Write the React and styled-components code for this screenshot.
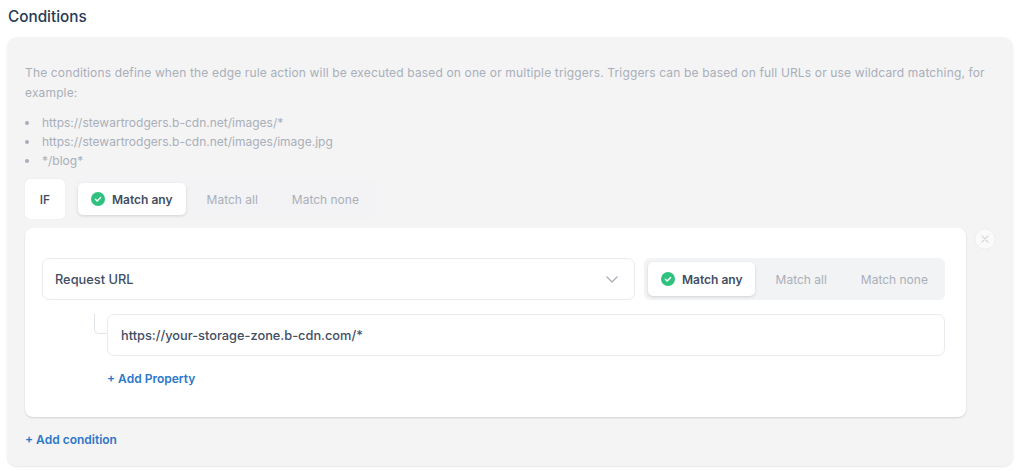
import React from 'react';
import styled, { createGlobalStyle } from 'styled-components';

const GlobalStyle = createGlobalStyle`
  html, body {
    margin: 0;
    padding: 0;
    background: #ffffff;
    font-family: Inter, "Liberation Sans", sans-serif;
  }
`;

const Page = styled.div`
  width: 1024px;
  height: 471px;
  overflow: hidden;
  padding: 7px 11px 0 7px;
  box-sizing: border-box;
`;

const Title = styled.h2`
  margin: 0 0 11px 1px;
  font-size: 15.3px;
  line-height: 19px;
  font-weight: 500;
  color: #243a55;
`;

const Panel = styled.section`
  height: 429px;
  box-sizing: border-box;
  padding: 26px 18px 0 18px;
  background: #f4f4f5;
  border-radius: 10px;
  box-shadow: 0 1px 2px rgba(0, 0, 0, 0.1);
`;

const Description = styled.p`
  margin: 0 0 10px;
  font-size: 12px;
  letter-spacing: 0.15px;
  line-height: 20px;
  color: #a9afb9;
`;

const ExampleList = styled.ul`
  margin: 0 0 9px;
  padding: 0;
  list-style: none;
  font-size: 12px;
  line-height: 19px;
  color: #a9afb9;
`;

const ExampleItem = styled.li`
  display: flex;
  align-items: center;

  &::before {
    content: '';
    width: 4px;
    height: 4px;
    margin-right: 13px;
    border-radius: 50%;
    background: #a9afb9;
  }
`;

const IfRow = styled.div`
  display: flex;
  align-items: flex-start;
  gap: 9px;
`;

const IfBadge = styled.div`
  width: 40px;
  height: 40px;
  display: flex;
  align-items: center;
  justify-content: center;
  background: #fff;
  border-radius: 5px;
  box-shadow: 0 0 1px rgba(0, 0, 0, 0.12);
  font-size: 12px;
  font-weight: 500;
  color: #3b4a5f;
`;

const Toggle = styled.div`
  flex-shrink: 0;
  display: flex;
  align-items: center;
  height: ${(p) => (p.$muted ? '40px' : '42px')};
  width: ${(p) => (p.$muted ? 'auto' : '301px')};
  box-sizing: border-box;
  padding: 4px 0 4px 4px;
  border-radius: 6px;
  background: ${(p) => (p.$muted ? '#f3f3f5' : '#f2f3f5')};
`;

const activePadding = (p) => (p.$muted ? '0 13px' : '0 12px 0 13px');

const ToggleOption = styled.div`
  height: ${(p) => (p.$muted ? '32px' : '34px')};
  box-sizing: border-box;
  display: flex;
  align-items: center;
  gap: 7px;
  font-size: 12px;
  white-space: nowrap;
  padding: ${(p) => (p.$active ? activePadding(p) : '0 17px')};
  margin-right: ${(p) => (p.$active ? '4px' : '0')};
  border-radius: 5px;
  font-weight: ${(p) => (p.$active ? 600 : 400)};
  color: ${(p) => (p.$active ? '#414e63' : '#a9afb9')};
  background: ${(p) => (p.$active ? '#fff' : 'transparent')};
  box-shadow: ${(p) => (p.$active ? '0 1px 3px rgba(0, 0, 0, 0.14)' : 'none')};
`;

const ConditionRow = styled.div`
  position: relative;
  margin-top: 9px;
`;

const Card = styled.div`
  width: 941px;
  height: 189px;
  box-sizing: border-box;
  padding: 30px 21px 0 17px;
  background: #fff;
  border-radius: 8px;
  box-shadow: 0 1px 2px rgba(0, 0, 0, 0.14);
`;

const CloseButton = styled.button`
  position: absolute;
  top: 1px;
  left: 950px;
  width: 20px;
  height: 20px;
  padding: 0;
  display: flex;
  align-items: center;
  justify-content: center;
  border: none;
  border-radius: 50%;
  background: #fafafa;
  box-shadow: 0 0 1px rgba(0, 0, 0, 0.12);
`;

const FieldRow = styled.div`
  display: flex;
  gap: 9px;
`;

const Select = styled.div`
  flex: 1;
  height: 42px;
  box-sizing: border-box;
  padding: 0 16px 0 12px;
  display: flex;
  align-items: center;
  justify-content: space-between;
  border: 1px solid #e8ebef;
  border-radius: 7px;
  font-size: 12.8px;
  font-weight: 450;
  color: #414e63;
`;

const PropertyRow = styled.div`
  position: relative;
  margin: 14px 0 0 65px;
`;

const Elbow = styled.span`
  position: absolute;
  left: -13px;
  top: 0;
  width: 13px;
  height: 20px;
  box-sizing: border-box;
  border-left: 1px solid #dfe4ea;
  border-bottom: 1px solid #dfe4ea;
  border-bottom-left-radius: 5px;
`;

const Input = styled.div`
  height: 42px;
  box-sizing: border-box;
  padding: 0 13px;
  display: flex;
  align-items: center;
  border: 1px solid #e8ebef;
  border-radius: 7px;
  font-size: 12.8px;
  font-weight: 450;
  color: #414e63;
`;

const AddLink = styled.a`
  display: block;
  font-size: 12px;
  line-height: 16px;
  font-weight: 600;
  color: #2b77c9;
  margin: ${(p) => p.$margin};
`;

const CheckIcon = () => (
  <svg width="14" height="14" viewBox="0 0 14 14">
    <circle cx="7" cy="7" r="7" fill="#2fc27e" />
    <path d="M4.4 7.2l1.8 1.7 3.4-3.4" fill="none" stroke="#fff" strokeWidth="1.4" strokeLinecap="round" strokeLinejoin="round" />
  </svg>
);

const MatchToggle = ({ muted }) => (
  <Toggle $muted={muted}>
    <ToggleOption $active $muted={muted}>
      <CheckIcon />
      Match any
    </ToggleOption>
    <ToggleOption $muted={muted}>Match all</ToggleOption>
    <ToggleOption $muted={muted}>Match none</ToggleOption>
  </Toggle>
);

export default function App() {
  return (
    <Page>
      <GlobalStyle />
      <Title>Conditions</Title>
      <Panel>
        <Description>
          The conditions define when the edge rule action will be executed based on one or multiple triggers. Triggers can be based on full URLs or use wildcard matching, for example:
        </Description>
        <ExampleList>
          <ExampleItem>https://stewartrodgers.b-cdn.net/images/*</ExampleItem>
          <ExampleItem>https://stewartrodgers.b-cdn.net/images/image.jpg</ExampleItem>
          <ExampleItem>*/blog*</ExampleItem>
        </ExampleList>
        <IfRow>
          <IfBadge>IF</IfBadge>
          <MatchToggle muted />
        </IfRow>
        <ConditionRow>
          <Card>
            <FieldRow>
              <Select>
                Request URL
                <svg width="12" height="7" viewBox="0 0 12 7">
                  <path d="M1 1l5 5 5-5" fill="none" stroke="#a9afb9" strokeWidth="1.4" strokeLinecap="round" strokeLinejoin="round" />
                </svg>
              </Select>
              <MatchToggle />
            </FieldRow>
            <PropertyRow>
              <Elbow />
              <Input>https://your-storage-zone.b-cdn.com/*</Input>
              <AddLink $margin="15px 0 0 0">+ Add Property</AddLink>
            </PropertyRow>
          </Card>
          <CloseButton aria-label="Remove">
            <svg width="8" height="8" viewBox="0 0 8 8">
              <path d="M1 1l6 6M7 1l-6 6" fill="none" stroke="#d5d8dd" strokeWidth="1.2" strokeLinecap="round" />
            </svg>
          </CloseButton>
        </ConditionRow>
        <AddLink $margin="15px 0 0 0">+ Add condition</AddLink>
      </Panel>
    </Page>
  );
}
